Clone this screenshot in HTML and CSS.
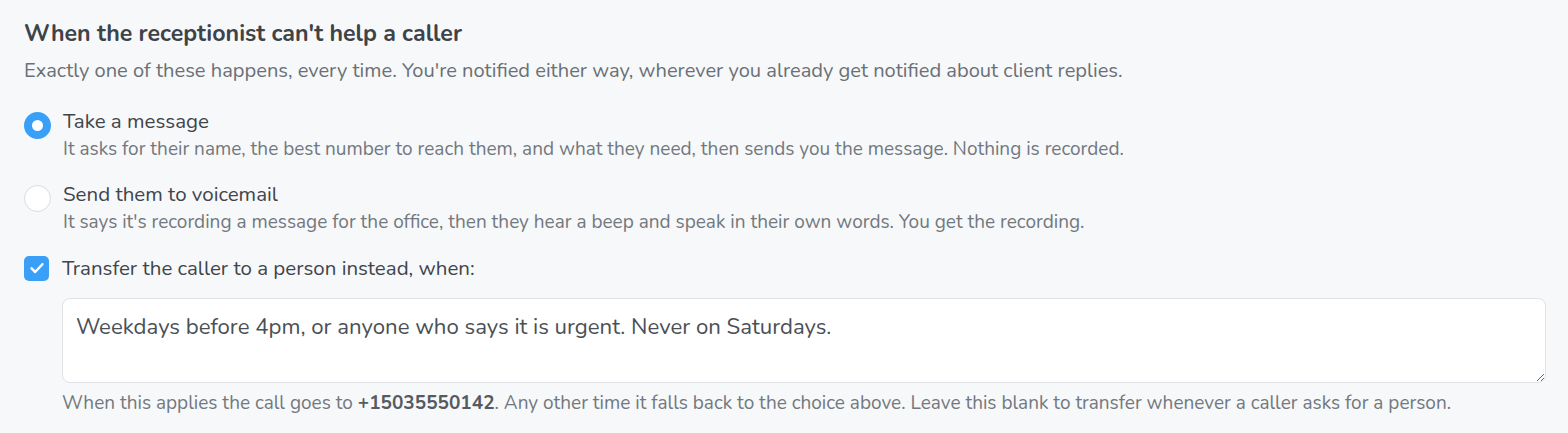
FILE: index.html
```html
<!DOCTYPE html>
<html lang="en">
<head>
<meta charset="utf-8">
<title>Fallback behaviour</title>
<link rel="stylesheet" href="styles.css">
</head>
<body>
<section class="panel">
  <h2 class="title">When the receptionist can't help a caller</h2>
  <p class="subtitle">Exactly one of these happens, every time. You're notified either way, wherever you already get notified about client replies.</p>

  <div class="options">
    <label class="option">
      <span class="radio radio-on"></span>
      <span class="option-text">
        <span class="option-label">Take a message</span>
        <span class="option-desc">It asks for their name, the best number to reach them, and what they need, then sends you the message. Nothing is recorded.</span>
      </span>
    </label>
    <label class="option">
      <span class="radio"></span>
      <span class="option-text">
        <span class="option-label">Send them to voicemail</span>
        <span class="option-desc">It says it's recording a message for the office, then they hear a beep and speak in their own words. You get the recording.</span>
      </span>
    </label>
  </div>

  <label class="check-row">
    <span class="checkbox">
      <svg viewBox="0 0 24 24" width="20" height="20"><path d="M5.5 12.5l4.3 4.3 8.7-9.3" fill="none" stroke="#fff" stroke-width="3" stroke-linecap="round" stroke-linejoin="round"/></svg>
    </span>
    <span class="option-label">Transfer the caller to a person instead, when:</span>
  </label>

  <div class="transfer">
    <textarea class="rules">Weekdays before 4pm, or anyone who says it is urgent. Never on Saturdays.</textarea>
    <p class="helper">When this applies the call goes to <strong>+15035550142</strong>. Any other time it falls back to the choice above. Leave this blank to transfer whenever a caller asks for a person.</p>
  </div>
</section>
</body>
</html>
```
FILE: styles.css
```css
html, body {
  margin: 0;
  padding: 0;
  background: #f7f8fa;
}
body {
  font-family: "Nunito", "Open Sans", "Noto Sans", sans-serif;
  color: #3f454b;
}
.panel {
  padding: 19px 22px 0 24px;
}
.title {
  margin: 0;
  font-size: 23.2px;
  line-height: 30px;
  font-weight: 700;
  color: #3d4348;
}
.subtitle {
  margin: 9px 0 0;
  font-size: 20.1px;
  line-height: 26px;
  color: #6a7076;
}
.options {
  margin-top: 24px;
  display: flex;
  flex-direction: column;
  gap: 20px;
}
.option, .check-row {
  display: flex;
  align-items: flex-start;
  gap: 12px;
}
.radio {
  flex: none;
  box-sizing: border-box;
  width: 27px;
  height: 27px;
  margin-top: 4px;
  border-radius: 50%;
  background: #fff;
  border: 1px solid #d8dbdf;
}
.radio-on {
  border: 8px solid #3aa0f7;
}
.option-text {
  display: flex;
  flex-direction: column;
  gap: 3px;
}
.option-label {
  font-size: 20.5px;
  line-height: 26px;
  color: #3f454b;
}
.option-desc {
  font-size: 19px;
  line-height: 24px;
  color: #72787e;
}
.check-row {
  margin-top: 21px;
  align-items: center;
  gap: 13px;
}
.checkbox {
  flex: none;
  box-sizing: border-box;
  width: 25px;
  height: 25px;
  border-radius: 5px;
  background: #3aa0f7;
  display: flex;
  align-items: center;
  justify-content: center;
}
.transfer {
  margin-top: 17px;
  padding-left: 38px;
}
.rules {
  display: block;
  box-sizing: border-box;
  width: 100%;
  height: 85px;
  margin: 0;
  padding: 13px 13px;
  border: 1px solid #dfe2e6;
  border-radius: 8px;
  background: #fff;
  font-family: inherit;
  font-size: 22.2px;
  line-height: 30px;
  color: #4a5056;
  resize: vertical;
}
.helper {
  margin: 8px 0 0;
  font-size: 19px;
  line-height: 24px;
  color: #72787e;
}
.helper strong {
  font-weight: 700;
  color: #555b61;
}
```
